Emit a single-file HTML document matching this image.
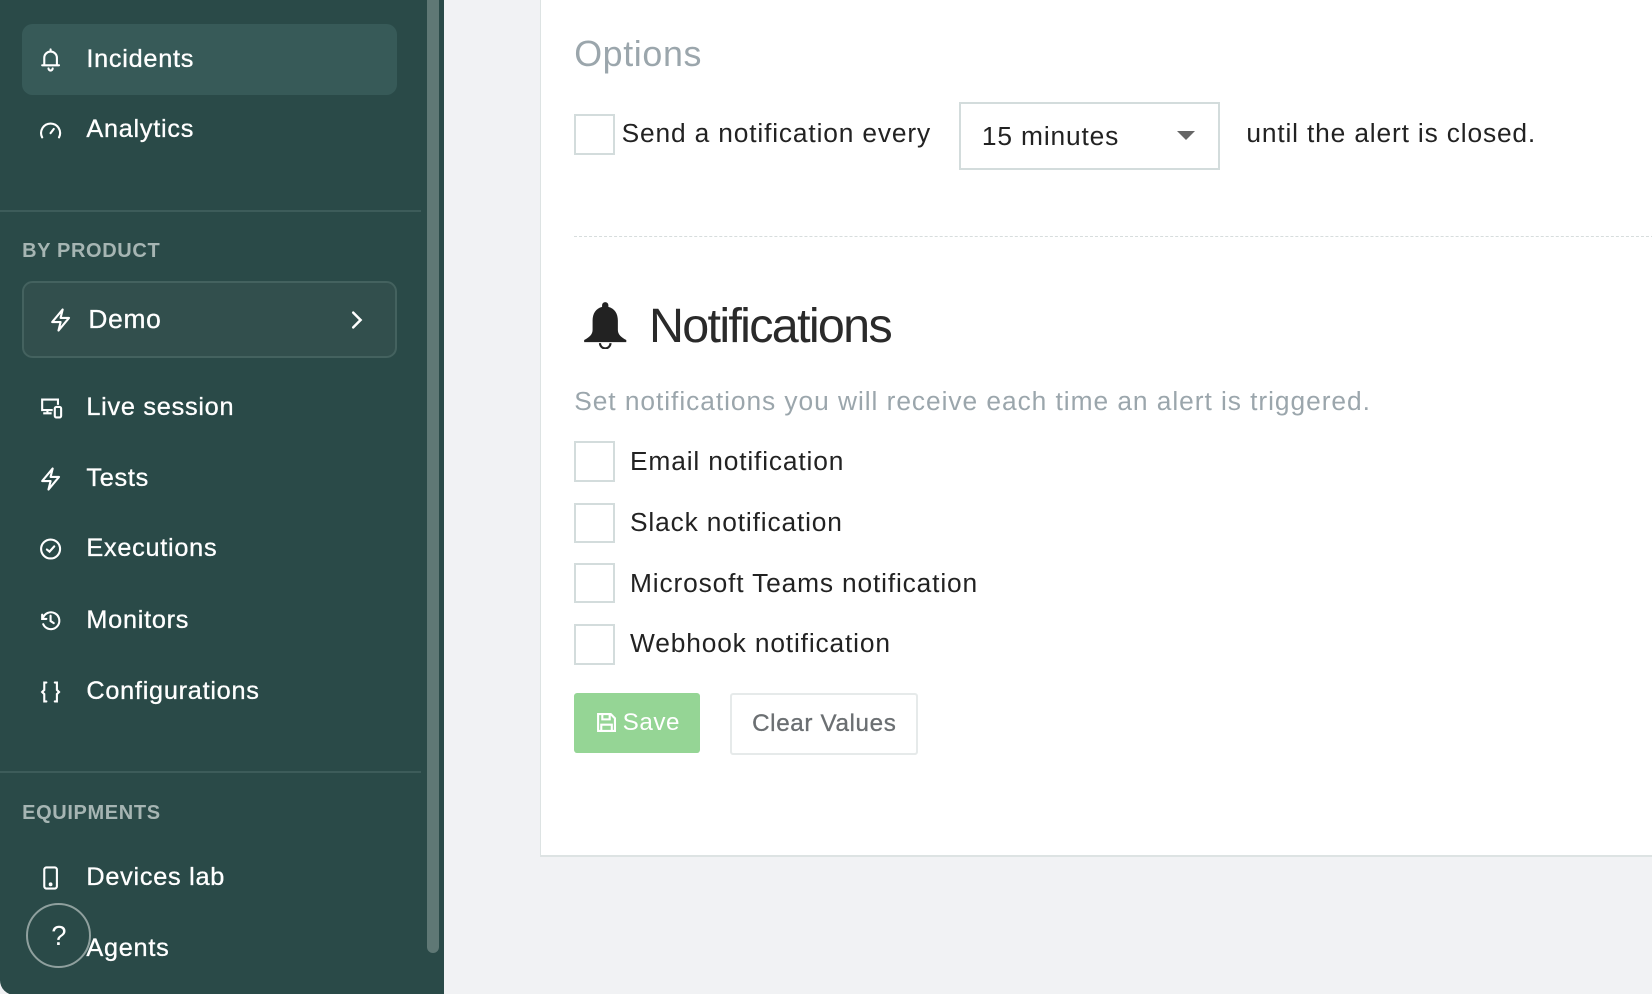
<!DOCTYPE html>
<html><head><meta charset="utf-8"><style>
html,body{margin:0;padding:0;width:1652px;height:994px;overflow:hidden;background:#f1f2f4;}
#w{zoom:1.05357;width:1568px;height:944px;position:relative;font-family:"Liberation Sans",Arial,sans-serif;}
.sb{position:absolute;left:0;top:0;width:421px;height:944px;background:#2a4a48;border-bottom-left-radius:14px;overflow:hidden}
.scr{position:absolute;left:405px;top:0;width:12px;height:905px;background:#5f7875;border-radius:0 0 6px 6px}
.it{position:absolute;left:21px;width:356px;height:67px;color:#fff;font-size:24px;letter-spacing:0.7px;-webkit-text-stroke:0.3px #fff}
.it svg{position:absolute;left:16px;top:50%;transform:translateY(-50%)}
.it span{position:absolute;left:61px;top:50%;transform:translateY(-52%)}
.act{background:#375a58;border-radius:10px}
.hd{position:absolute;left:21px;color:#a6b5b3;font-size:19px;font-weight:bold;letter-spacing:0.6px}
.dv{position:absolute;left:0;width:400px;height:2px;background:#3d5c5a}
.card{position:absolute;left:513px;top:0;width:1060px;height:812px;background:#fff;border-left:1px solid #dde3e3;border-bottom:2px solid #dde3e3}
.t{position:absolute;font-size:25px;color:#222;white-space:nowrap;letter-spacing:0.8px}
.cb{position:absolute;left:545px;width:35px;height:35px;border:2px solid #d3dcdc;background:#fff;box-sizing:content-box}
.g{color:#9ba6ac}
</style></head><body><div id="w">
<div class="sb">
 <div class="it act" style="top:23px"><svg width="22" height="24" viewBox="0 0 22 24" fill="none" stroke="#fff" stroke-width="2" stroke-linecap="round"><path d="M5 17V10a6 6 0 0 1 12 0v7M3 17h16M11 4V2M9 20a2 2 0 0 0 4 0"/></svg><span>Incidents</span></div>
 <div class="it" style="top:90px"><svg width="22" height="22" viewBox="0 0 22 22" fill="none" stroke="#fff" stroke-width="2" stroke-linecap="round"><path d="M3 18a9 9 0 1 1 16 0M11 14l3-4"/></svg><span>Analytics</span></div>
 <div class="dv" style="top:199px"></div>
 <div class="hd" style="top:228px">BY PRODUCT</div>
 <div class="it" style="top:267px;height:73px;box-sizing:border-box;border:2px solid #44625f;background:#324f4d;border-radius:10px"><svg width="22" height="24" viewBox="0 0 22 24" fill="none" stroke="#fff" stroke-width="2" stroke-linejoin="round" style="left:24px"><path d="M13 2L3 14h8l-2 8 10-12h-8z"/></svg><span style="left:61px;font-size:25px">Demo</span><svg width="14" height="20" viewBox="0 0 14 20" fill="none" stroke="#fff" stroke-width="2.4" stroke-linecap="round" style="left:308px"><path d="M4 3l7 7-7 7"/></svg></div>
 <div class="it" style="top:354px"><svg width="24" height="22" viewBox="0 0 24 22" fill="none" stroke="#fff" stroke-width="2"><path d="M13 13H3V3h15v5M8 13v3M4 16h8"/><rect x="15" y="10" width="6" height="10" rx="1.5"/></svg><span>Live session</span></div>
 <div class="it" style="top:421px"><svg width="22" height="24" viewBox="0 0 22 24" fill="none" stroke="#fff" stroke-width="2" stroke-linejoin="round"><path d="M13 2L3 14h8l-2 8 10-12h-8z"/></svg><span>Tests</span></div>
 <div class="it" style="top:488px"><svg width="22" height="22" viewBox="0 0 22 22" fill="none" stroke="#fff" stroke-width="2" stroke-linecap="round"><circle cx="11" cy="11" r="9"/><path d="M7.5 11.5l2.5 2 4.5-5"/></svg><span>Executions</span></div>
 <div class="it" style="top:556px"><svg width="22" height="22" viewBox="0 0 22 22" fill="none" stroke="#fff" stroke-width="2" stroke-linecap="round"><path d="M3 5v4h4M3.5 9A8 8 0 1 1 4 14M11 6v5l3 2"/></svg><span>Monitors</span></div>
 <div class="it" style="top:623px"><svg width="22" height="22" viewBox="0 0 22 22" fill="none" stroke="#fff" stroke-width="2" stroke-linecap="round"><path d="M7 2H5v7l-2 2 2 2v7h2M15 2h2v7l2 2-2 2v7h-2"/></svg><span>Configurations</span></div>
 <div class="dv" style="top:732px"></div>
 <div class="hd" style="top:761px">EQUIPMENTS</div>
 <div class="it" style="top:800px"><svg width="22" height="24" viewBox="0 0 22 24" fill="none" stroke="#fff" stroke-width="2"><rect x="5" y="2" width="12" height="20" rx="2"/><circle cx="11" cy="18" r=".8" fill="#fff"/></svg><span>Devices lab</span></div>
 <div class="it" style="top:867px"><span>Agents</span></div>
 <div style="position:absolute;left:25px;top:857px;width:58px;height:58px;border:2px solid #8fa09e;border-radius:50%;color:#fff;font-size:26px;text-align:center;line-height:58px">?</div>
 <div class="scr"></div>
</div>
<div class="card"></div>
<div class="t g" style="left:545px;top:32px;font-size:34px;letter-spacing:0.6px">Options</div>
<div class="cb" style="top:108px"></div>
<div class="t" style="left:590px;top:112px">Send a notification every</div>
<div style="position:absolute;left:910px;top:97px;width:244px;height:61px;border:2px solid #d3dcdc;background:#fff"></div>
<div class="t" style="left:932px;top:115px">15 minutes</div>
<div style="position:absolute;left:1117px;top:124px;border-left:9px solid transparent;border-right:9px solid transparent;border-top:9px solid #666"></div>
<div class="t" style="left:1183px;top:112px">until the alert is closed.</div>
<div style="position:absolute;left:545px;top:224px;width:1030px;border-top:1px dashed #d7dddd"></div>
<svg style="position:absolute;left:551px;top:285px" width="46" height="46" viewBox="0 0 46 46"><path d="M23 2a3 3 0 0 1 3 3v1.5c6 1.5 9 6.5 9 13v9c0 4 3 7 8 9.5v2H3v-2c5-2.5 8-5.5 8-9.5v-9c0-6.5 3-11.5 9-13V5a3 3 0 0 1 3-3z" fill="#222"/><path d="M18 41a5 5 0 0 0 10 0" fill="none" stroke="#222" stroke-width="2"/></svg>
<div class="t" style="left:616px;top:283px;font-size:46px;color:#2a2a2a;letter-spacing:-1.6px">Notifications</div>
<div class="t g" style="left:545px;top:366px;letter-spacing:0.9px">Set notifications you will receive each time an alert is triggered.</div>
<div class="cb" style="top:419px"></div><div class="t" style="left:598px;top:423px">Email notification</div>
<div class="cb" style="top:477px"></div><div class="t" style="left:598px;top:481px">Slack notification</div>
<div class="cb" style="top:534px"></div><div class="t" style="left:598px;top:539px">Microsoft Teams notification</div>
<div class="cb" style="top:592px"></div><div class="t" style="left:598px;top:596px">Webhook notification</div>
<div style="position:absolute;left:545px;top:658px;width:119px;height:57px;background:#95d595;border-radius:3px;color:#fff;font-size:23px;line-height:57px;letter-spacing:0.5px">
<svg style="position:absolute;left:21px;top:18px" width="20" height="20" viewBox="0 0 20 20" fill="none" stroke="#fff" stroke-width="2"><path d="M2 2h12l4 4v12H2z"/><path d="M6 2v5h7V2M5 18v-6h10v6"/></svg><span style="position:absolute;left:46px">Save</span></div>
<div style="position:absolute;left:693px;top:658px;width:175px;height:55px;border:2px solid #e6eaea;background:#fff;border-radius:3px;color:#6b6f72;font-size:23px;line-height:55px;text-align:center;letter-spacing:0.6px;-webkit-text-stroke:0.3px #6b6f72">Clear Values</div>
</div></body></html>
